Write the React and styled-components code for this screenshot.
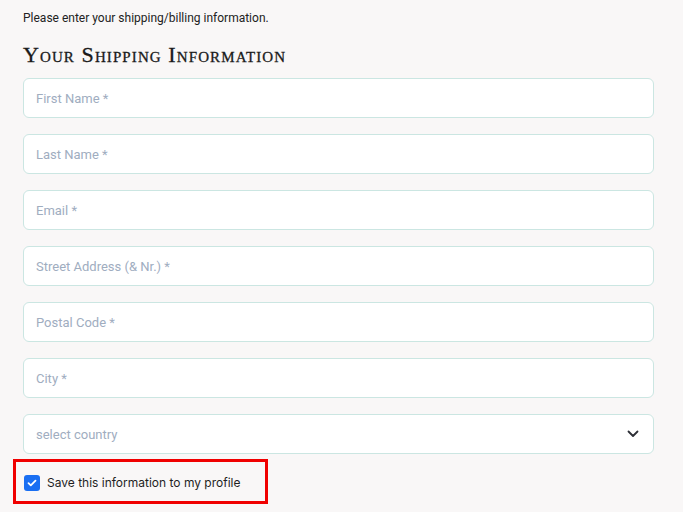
import React from "react";
import styled, { createGlobalStyle } from "styled-components";

const GlobalStyle = createGlobalStyle`
  html, body {
    margin: 0;
    padding: 0;
    background: #f9f7f7;
  }
  body {
    font-family: Roboto, "Liberation Sans", sans-serif;
  }
`;

const Page = styled.div`
  padding: 10px 29px 0 23px;
`;

const Intro = styled.p`
  margin: 0;
  font-size: 12px;
  line-height: 16px;
  color: #222;
`;

const Title = styled.h2`
  margin: 16px 0 10px;
  font-family: "Liberation Serif", serif;
  font-variant: small-caps;
  font-weight: 400;
  font-size: 22px;
  line-height: 26px;
  letter-spacing: 1.1px;
  color: #1a1a1a;
  -webkit-text-stroke: 0.3px #1a1a1a;
`;

const Fields = styled.div`
  display: flex;
  flex-direction: column;
  gap: 16px;
`;

const Input = styled.input`
  box-sizing: border-box;
  width: 100%;
  height: 40px;
  padding: 0 12px;
  border: 1px solid #cbe6e2;
  border-radius: 6px;
  background: #fff;
  font-family: Roboto, "Liberation Sans", sans-serif;
  font-size: 13px;
  color: #333;
  outline: none;
  &::placeholder {
    color: #a0adbf;
  }
`;

const SelectWrap = styled.div`
  height: 40px;
  box-sizing: border-box;
  border: 1px solid #cbe6e2;
  border-radius: 6px;
  background: #fff;
  display: flex;
  align-items: center;
  justify-content: space-between;
  padding: 0 14px 0 12px;
`;

const SelectText = styled.span`
  font-family: Roboto, "Liberation Sans", sans-serif;
  font-size: 13px;
  color: #a0adbf;
`;

const SaveBox = styled.label`
  display: flex;
  align-items: center;
  gap: 7px;
  margin: 5px 0 0 -10px;
  padding: 2px 0 0 8px;
  border: 3px solid #f00000;
  box-sizing: border-box;
  width: 255px;
  height: 45px;
`;

const Check = styled.span`
  width: 16px;
  height: 16px;
  border-radius: 3px;
  background: #1a6ff2;
  display: flex;
  align-items: center;
  justify-content: center;
`;

const SaveText = styled.span`
  font-family: Inter, "Liberation Sans", sans-serif;
  font-size: 12px;
  color: #1f1f1f;
  white-space: nowrap;
`;

const fields = [
  "First Name *",
  "Last Name *",
  "Email *",
  "Street Address (& Nr.) *",
  "Postal Code *",
  "City *",
];

export default function App() {
  return (
    <>
      <GlobalStyle />
      <Page>
        <Intro>Please enter your shipping/billing information.</Intro>
        <Title>Your Shipping Information</Title>
        <Fields>
          {fields.map((f) => (
            <Input key={f} placeholder={f} />
          ))}
          <SelectWrap>
            <SelectText>select country</SelectText>
            <svg width="12" height="8" viewBox="0 0 12 8" fill="none">
              <path d="M1.5 1.5 6 6l4.5-4.5" stroke="#2d2f36" strokeWidth="1.8" strokeLinecap="round" strokeLinejoin="round" />
            </svg>
          </SelectWrap>
        </Fields>
        <SaveBox>
          <Check>
            <svg width="10" height="8" viewBox="0 0 10 8" fill="none">
              <path d="M1.5 4.2 3.8 6.3 8.5 1.6" stroke="#fff" strokeWidth="1.8" strokeLinecap="round" strokeLinejoin="round" />
            </svg>
          </Check>
          <SaveText>Save this information to my profile</SaveText>
        </SaveBox>
      </Page>
    </>
  );
}
